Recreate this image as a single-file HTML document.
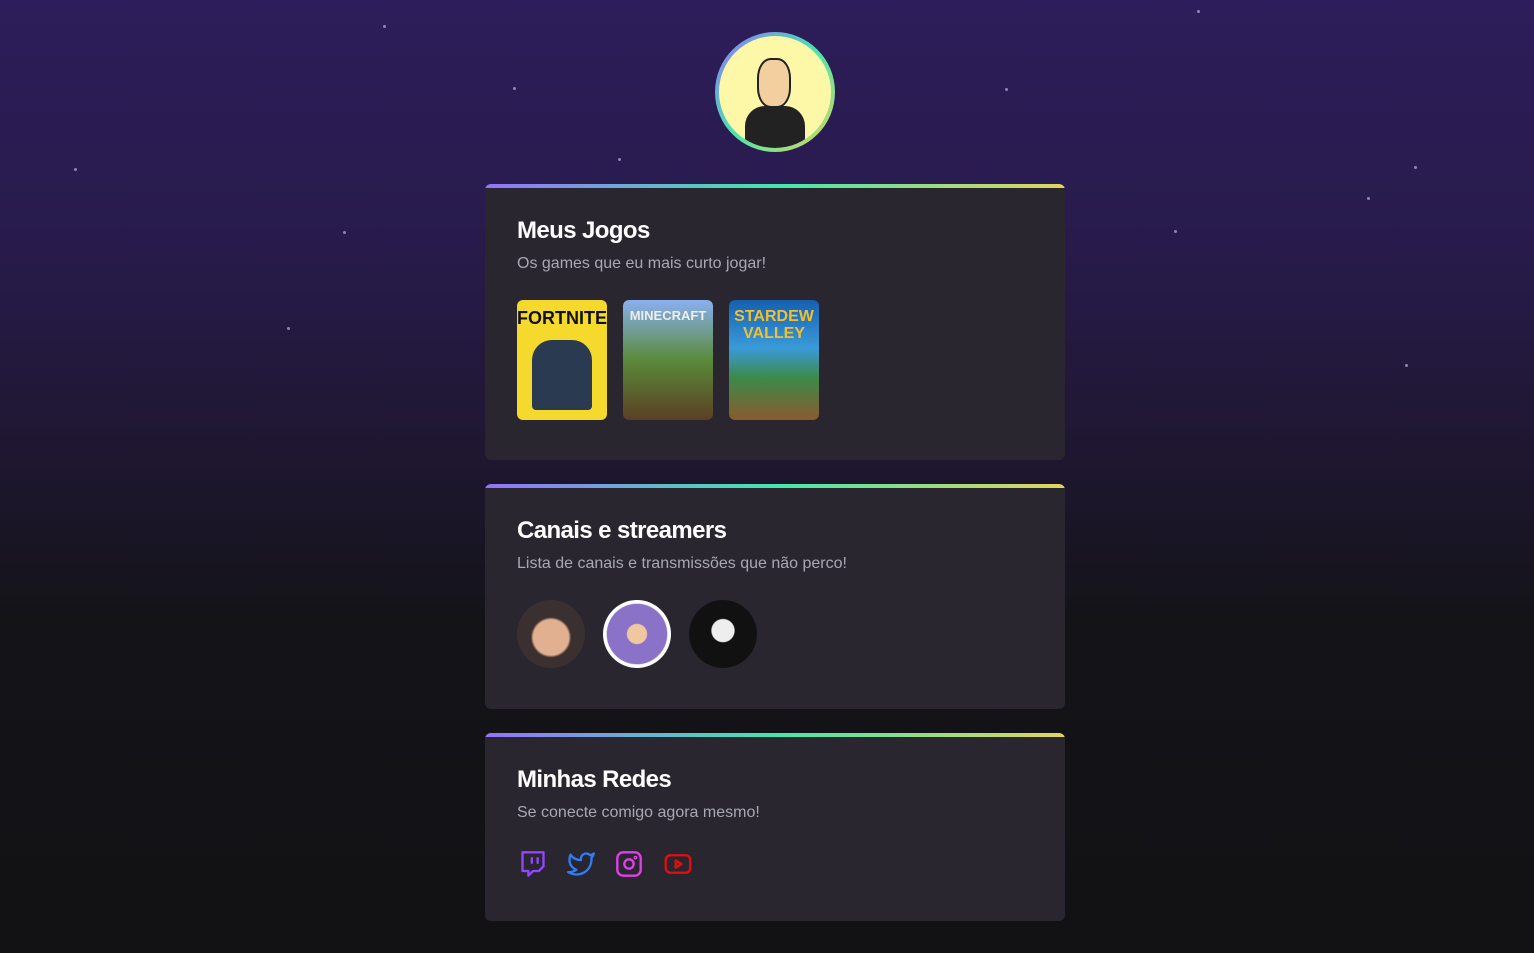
<!DOCTYPE html>
<html><head><meta charset="utf-8"><style>
*{margin:0;padding:0;box-sizing:border-box}
body{width:1534px;height:953px;overflow:hidden;font-family:"Liberation Sans",sans-serif;
background:linear-gradient(180deg,#2d1d5a 0%,#281b4c 25%,#1e1730 48%,#141318 65%,#121214 100%);position:relative}
.star{position:absolute;width:3px;height:3px;border-radius:50%;background:#bbb0e0;opacity:.7}
.avatar{position:absolute;left:715px;top:32px;width:120px;height:120px;border-radius:50%;
background:linear-gradient(135deg,#9572fc,#43e7ad,#e2d45c);padding:4px}
.avatar div{width:100%;height:100%;border-radius:50%;background:#fdf7a8;position:relative;overflow:hidden}
.card{position:absolute;left:485px;width:580px;background:#29262f;border-radius:6px;padding:0 32px;overflow:hidden}
.card:before{content:"";position:absolute;left:0;top:0;right:0;height:4px;background:linear-gradient(90deg,#9572fc,#43e7ad,#e2d45c)}
h2{color:#fff;font-size:24px;font-weight:900;letter-spacing:-0.6px;margin-top:32px;line-height:30px}
p{color:#a8a8b3;font-size:16px;margin-top:7px;line-height:22px}
.games{display:flex;gap:16px;margin-top:25px}
.g{width:90px;height:120px;border-radius:6px;position:relative;overflow:hidden}
.g span{position:absolute;top:8px;left:0;right:0;text-align:center;font-weight:900;font-size:18px}
.st{display:flex;gap:18px;margin-top:25px}
.st div{width:68px;height:68px;border-radius:50%}
.ic{display:flex;gap:20px;margin-top:26px;padding-left:2px}
</style></head><body>
<div class="star" style="left:383px;top:25px"></div><div class="star" style="left:513px;top:87px"></div>
<div class="star" style="left:1005px;top:88px"></div><div class="star" style="left:1197px;top:10px"></div>
<div class="star" style="left:1414px;top:166px"></div><div class="star" style="left:1367px;top:197px"></div>
<div class="star" style="left:343px;top:231px"></div><div class="star" style="left:74px;top:168px"></div>
<div class="star" style="left:287px;top:327px"></div><div class="star" style="left:618px;top:158px"></div>
<div class="star" style="left:1174px;top:230px"></div><div class="star" style="left:1405px;top:364px"></div>
<div class="avatar"><div>
<div style="position:absolute;left:38px;top:22px;width:34px;height:50px;background:#f3cfa0;border-radius:40%;border:2px solid #222"></div>
<div style="position:absolute;left:26px;top:70px;width:60px;height:50px;background:#222;border-radius:20px 20px 0 0"></div>
</div></div>

<div class="card" style="top:184px;height:276px">
<h2>Meus Jogos</h2><p>Os games que eu mais curto jogar!</p>
<div class="games">
<div class="g" style="background:#f5d92c"><span style="color:#111">FORTNITE</span><div style="position:absolute;left:15px;top:40px;width:60px;height:70px;background:#2a3a50;border-radius:20px 20px 4px 4px"></div></div>
<div class="g" style="background:linear-gradient(180deg,#8ab0f0,#5a8a3a 50%,#5b3f24)"><span style="color:#eee;font-size:13px">MINECRAFT</span></div>
<div class="g" style="background:linear-gradient(180deg,#1560b0,#3a9ad8 40%,#3c8a4a 65%,#8a5a30)"><span style="color:#f0c030;font-size:16px;line-height:17px">STARDEW VALLEY</span></div>
</div></div>

<div class="card" style="top:484px;height:225px">
<h2>Canais e streamers</h2><p>Lista de canais e transmissões que não perco!</p>
<div class="st">
<div style="background:radial-gradient(circle at 50% 55%,#e0b090 35%,#3a3030 40%)"></div>
<div style="background:radial-gradient(circle,#f0c8a0 20%,#8a72c8 22%,#8a72c8 62%,#fff 64%)"></div>
<div style="background:radial-gradient(circle at 50% 45%,#eee 22%,#111 24%)"></div>
</div></div>

<div class="card" style="top:733px;height:188px">
<h2>Minhas Redes</h2><p>Se conecte comigo agora mesmo!</p>
<div class="ic">
<svg width="28" height="28" viewBox="0 0 24 24" fill="none" stroke="#9147ff" stroke-width="2" stroke-linecap="round" stroke-linejoin="round"><path d="M21 2H3v16h5v4l4-4h5l4-4V2z"/><path d="M11 11V7M16 11V7"/></svg>
<svg width="28" height="28" viewBox="0 0 24 24" fill="none" stroke="#2f7df6" stroke-width="2" stroke-linejoin="round"><path d="M23 3a10.9 10.9 0 0 1-3.14 1.53 4.48 4.48 0 0 0-7.86 3v1A10.66 10.66 0 0 1 3 4s-4 9 5 13a11.64 11.64 0 0 1-7 2c9 5 20 0 20-11.5a4.5 4.5 0 0 0-.08-.83A7.72 7.72 0 0 0 23 3z"/></svg>
<svg width="28" height="28" viewBox="0 0 24 24" fill="none" stroke="#e040e8" stroke-width="2"><rect x="2" y="2" width="20" height="20" rx="5"/><circle cx="12" cy="12" r="4"/><circle cx="17.5" cy="6.5" r=".6"/></svg>
<svg width="30" height="28" viewBox="0 0 24 24" fill="none" stroke="#e30e0e" stroke-width="2" stroke-linejoin="round"><rect x="1.5" y="4.5" width="21" height="15" rx="4"/><path d="M10 9l5 3-5 3z"/></svg>
</div></div>
</body></html>
